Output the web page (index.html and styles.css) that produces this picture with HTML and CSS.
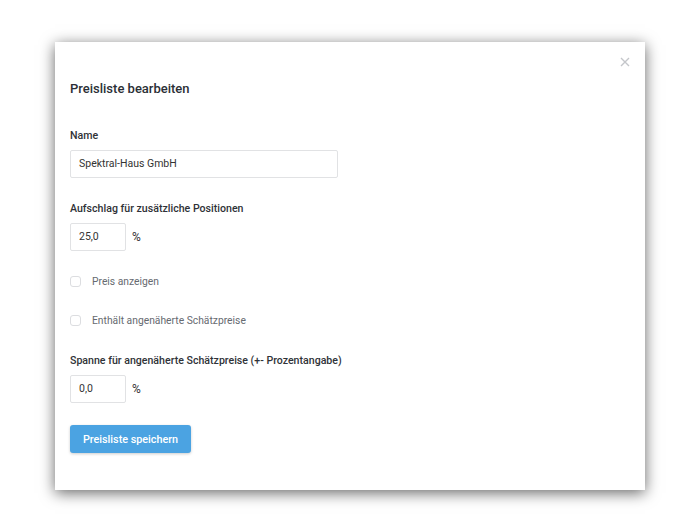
FILE: index.html
```html
<!DOCTYPE html>
<html lang="de">
<head>
<meta charset="utf-8">
<title>Preisliste bearbeiten</title>
<link rel="stylesheet" href="styles.css">
</head>
<body>
<div class="page">
  <div class="modal">
    <button class="close" aria-label="Schließen">
      <svg width="10" height="10" viewBox="0 0 10 10"><path d="M1 1L9 9M9 1L1 9" stroke="#c4c6ca" stroke-width="1.4" fill="none"/></svg>
    </button>
    <h2 class="title">Preisliste bearbeiten</h2>
    <div class="field first">
      <label class="label">Name</label>
      <div class="input wide">Spektral-Haus GmbH</div>
    </div>
    <div class="field">
      <label class="label">Aufschlag für zusätzliche Positionen</label>
      <div class="row"><div class="input small">25,0</div><span class="unit">%</span></div>
    </div>
    <div class="check"><span class="box"></span><span class="check-label">Preis anzeigen</span></div>
    <div class="check"><span class="box"></span><span class="check-label">Enthält angenäherte Schätzpreise</span></div>
    <div class="field last">
      <label class="label">Spanne für angenäherte Schätzpreise (+- Prozentangabe)</label>
      <div class="row"><div class="input small">0,0</div><span class="unit">%</span></div>
    </div>
    <div class="actions"><button class="btn">Preisliste speichern</button></div>
  </div>
</div>
</body>
</html>
```
FILE: styles.css
```css
* { box-sizing: border-box; }
html, body { margin: 0; padding: 0; background: #fff; }
body { font-family: Roboto, "Noto Sans", sans-serif; color: #333; }
.page { padding: 42px 0 42px 55px; }
.modal {
  position: relative;
  width: 590px;
  height: 448px;
  background: #fff;
  padding: 37px 15px 0 15px;
  box-shadow: 0 3px 14px rgba(0,0,0,0.6);
}
.close {
  position: absolute;
  top: 15px;
  right: 15px;
  width: 10px;
  height: 10px;
  padding: 0;
  border: 0;
  background: none;
  display: flex;
}
.title {
  margin: 0;
  font-size: 13px;
  line-height: 20px;
  font-weight: 500;
  color: #2b2f36;
}
.field { margin-top: 23px; display: flex; flex-direction: column; gap: 6px; }
.field.first { margin-top: 29px; }
.field.last { margin-top: 25px; }
.label { font-size: 10.6px; line-height: 16px; font-weight: 500; color: #2f3237; }
.input {
  height: 28px;
  border: 1px solid #e1e2e4;
  border-radius: 2px;
  padding: 0 8px;
  font-size: 10.5px;
  line-height: 26px;
  color: #333;
}
.input.wide { width: 268px; }
.input.small { width: 56px; }
.row { display: flex; align-items: center; gap: 6px; }
.unit { font-size: 12px; color: #333; }
.check { margin-top: 22px; display: flex; align-items: center; gap: 11px; height: 16px; }
.check + .check { margin-top: 23px; }
.box { width: 11px; height: 11px; border: 1px solid #dcdde0; border-radius: 3px; }
.check-label { font-size: 10.3px; color: #666a70; }
.actions { margin-top: 22px; }
.btn {
  width: 121px;
  height: 28px;
  border: 0;
  border-radius: 3px;
  background: #4ba3e2;
  color: #fff;
  font-family: inherit;
  font-size: 10.8px;
  font-weight: 500;
  box-shadow: 0 1px 3px rgba(0,0,0,0.2);
}
```
